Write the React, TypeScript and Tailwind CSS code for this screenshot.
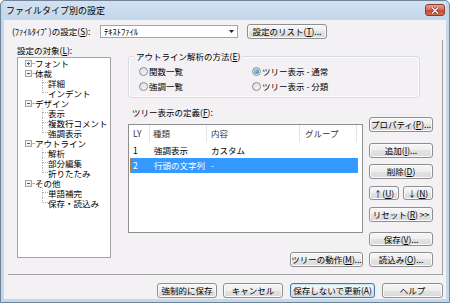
import React from "react";

type BtnProps = {
  children: React.ReactNode;
  className?: string;
  primary?: boolean;
};

// windows 7 style push button
const Btn = ({ children, className = "", primary = false }: BtnProps) => (
  <div
    className={`flex items-center justify-center rounded-[3px] border text-[8.5px] leading-none text-black whitespace-nowrap bg-[linear-gradient(to_bottom,#f6f6f6_0%,#eeeeee_50%,#e3e3e3_50%,#dadada_100%)] ${
      primary
        ? "border-[#3c7fb1] shadow-[inset_0_0_0_1px_#c4e5f6]"
        : "border-[#8f8f8f] shadow-[inset_0_0_0_1px_#fbfbfb]"
    } ${className}`}
  >
    {children}
  </div>
);

const U = ({ c }: { c: string }) => <span className="underline">{c}</span>;

const Radio = ({ label, checked = false }: { label: string; checked?: boolean }) => (
  <div className="flex h-[10px] items-center">
    <span className="flex h-[9px] w-[9px] items-center justify-center rounded-full border border-[#8e8f8f] bg-[linear-gradient(135deg,#dcdcdc,#f8f8f8)]">
      {checked && (
        <span className="h-[5px] w-[5px] rounded-full bg-[radial-gradient(circle_at_35%_35%,#8fd0f5,#1a6fb8)]" />
      )}
    </span>
    <span className="ml-[1px]">{label}</span>
  </div>
);

const TREE = [
  { label: "フォント", open: false, children: [] as string[] },
  { label: "体裁", open: true, children: ["詳細", "インデント"] },
  { label: "デザイン", open: true, children: ["表示", "複数行コメント", "強調表示"] },
  { label: "アウトライン", open: true, children: ["解析", "部分編集", "折りたたみ"] },
  { label: "その他", open: true, children: ["単語補完", "保存・読込み"] },
];

const TreeView = () => (
  <div className="h-[201px] w-[94px] border border-[#a3a3a3] bg-white">
    {TREE.map((node) => (
      <div key={node.label}>
        <div className="flex h-[10px] items-center">
          <div className="relative ml-[7px] flex h-[7px] w-[7px] items-center justify-center border border-[#a6a6a6] bg-[linear-gradient(135deg,#ffffff,#e6e6e6)]">
            <div className="h-px w-[3px] bg-[#3a5f8f]" />
            {!node.open && <div className="absolute h-[3px] w-px bg-[#3a5f8f]" />}
          </div>
          <div className="w-[2px] border-t border-dotted border-[#b4b4b4]" />
          <span className="ml-[1px]">{node.label}</span>
        </div>
        {node.children.map((child, i) => (
          <div key={child} className="flex h-[10px] items-center">
            <div className="ml-[24px] flex h-full w-[6px] flex-col">
              <div className="h-1/2 border-b border-l border-dotted border-[#b4b4b4]" />
              {i < node.children.length - 1 && (
                <div className="h-1/2 border-l border-dotted border-[#b4b4b4]" />
              )}
            </div>
            <span>{child}</span>
          </div>
        ))}
      </div>
    ))}
  </div>
);

const ROWS = [
  { ly: "1", kind: "強調表示", body: "カスタム", selected: false },
  { ly: "2", kind: "行頭の文字列", body: "-", selected: true },
];

const ListView = () => (
  <div className="mt-[7px] h-[109px] w-[235px] border border-[#8e8f8f] bg-white">
    <div className="flex h-[17px] items-center text-[#333]">
      <div className="flex h-full w-[21px] items-center border-r border-[#e3e3e3] pl-[4px]">LY</div>
      <div className="flex h-full w-[57px] items-center border-r border-[#e3e3e3] pl-[3px]">種類</div>
      <div className="flex h-full w-[93px] items-center border-r border-[#e3e3e3] pl-[4px]">内容</div>
      <div className="flex h-full w-[57px] items-center border-r border-[#e3e3e3] pl-[5px]">グループ</div>
    </div>
    {ROWS.map((r) => (
      <div
        key={r.ly}
        className={`ml-[1px] flex w-[228px] items-center ${
          r.selected
            ? "h-[15px] border border-dotted border-[#b8864a] bg-[#3399ff] text-white"
            : "h-[16px] border border-transparent"
        }`}
      >
        <div className="w-[20px] pl-[2px]">{r.ly}</div>
        <div className="w-[57px] pl-[3px]">{r.kind}</div>
        <div className="w-[93px] pl-[3px]">{r.body}</div>
      </div>
    ))}
  </div>
);

const App = () => {
  return (
    <div className="flex h-[303px] w-[450px] flex-col rounded-t-[5px] border border-[#6f8399] bg-[#c4d8ed] px-[3px] pb-[3px] font-['Noto_Sans_CJK_JP',sans-serif] text-[8.5px] leading-none text-black">
      {/* title bar */}
      <div className="flex h-[19px] items-start justify-between bg-[linear-gradient(to_bottom,#d3e2f1,#c2d6eb)]">
        <span className="ml-[2px] mt-[5px] text-[9px]">ファイルタイプ別の設定</span>
        <div className="mr-[1px] mt-[3px] flex h-[12px] w-[20px] items-center justify-center rounded-[3px] border border-[#8a3d30] bg-[linear-gradient(to_bottom,#e8a090_0%,#d46a55_50%,#c14a33_51%,#cf6b4f_100%)]">
          <svg width="8" height="7" viewBox="0 0 8 7">
            <path d="M1 0.5 L7 6.5 M7 0.5 L1 6.5" stroke="#5a1e14" strokeWidth="2.4" />
            <path d="M1 0.5 L7 6.5 M7 0.5 L1 6.5" stroke="#ffffff" strokeWidth="1.4" />
          </svg>
        </div>
      </div>

      {/* client area */}
      <div className="flex flex-1 flex-col bg-[#f4f1f4]">
        <div className="mt-[3px] flex h-[16px] items-center pl-[8px]">
          <span className="w-[88px]">
            (ﾌｧｲﾙﾀｲﾌﾟ)の設定(<U c="S" />):
          </span>
          <div className="flex h-[13px] w-[138px] items-center justify-between border border-[#a5a5a5] bg-white pl-[3px]">
            <span>ﾃｷｽﾄﾌｧｲﾙ</span>
            <div className="flex h-full w-[11px] items-center justify-center">
              <svg width="5" height="3" viewBox="0 0 5 3">
                <path d="M0 0 H5 L2.5 3 Z" fill="#222" />
              </svg>
            </div>
          </div>
          <Btn className="ml-[9px] h-[15px] w-[80px]">
            設定のリスト(<U c="T" />)...
          </Btn>
        </div>

        {/* property panel */}
        <div className="ml-[4px] mt-[1px] flex h-[235px] w-[435px] border-b border-r border-[#a0a0a0]">
          <div className="flex w-[120px] flex-col pl-[9px]">
            <span className="mt-[5px] flex h-[10px] items-center">
              設定の対象(<U c="L" />):
            </span>
            <div className="mt-[2px]">
              <TreeView />
            </div>
          </div>

          <div className="flex flex-col">
            <div className="relative mt-[16px] h-[42px] w-[292px] rounded-[3px] border border-[#d5dde3] shadow-[inset_0_0_0_1px_#fbfbfb]">
              <span className="absolute left-[5px] top-[-6px] flex h-[10px] items-center bg-[#f4f1f4] px-[2px]">
                アウトライン解析の方法(<U c="E" />)
              </span>
              <div className="grid grid-cols-[113px_1fr] gap-y-[5px] pl-[10px] pt-[9px]">
                <Radio label="関数一覧" />
                <Radio label="ツリー表示 - 通常" checked />
                <Radio label="強調一覧" />
                <Radio label="ツリー表示 - 分類" />
              </div>
            </div>

            <div className="flex">
              <div className="flex w-[235px] flex-col">
                <span className="ml-[4px] mt-[9px] flex h-[10px] items-center">
                  ツリー表示の定義(<U c="F" />):
                </span>
                <ListView />
                <Btn className="mt-[19px] h-[15px] w-[73px] self-end">
                  ツリーの動作(<U c="M" />)...
                </Btn>
              </div>

              <div className="ml-[6px] mt-[19px] flex w-[64px] flex-col">
                <Btn className="h-[15px]">
                  プロパティ(<U c="P" />)...
                </Btn>
                <Btn className="mt-[11px] h-[15px]">
                  追加(<U c="I" />)...
                </Btn>
                <Btn className="mt-[6px] h-[15px]">
                  削除(<U c="D" />)
                </Btn>
                <div className="mt-[7px] flex justify-between">
                  <Btn className="h-[14px] w-[30px]">
                    ↑(<U c="U" />)
                  </Btn>
                  <Btn className="h-[14px] w-[30px]">
                    ↓(<U c="N" />)
                  </Btn>
                </div>
                <Btn className="mt-[7px] h-[15px]">
                  リセット(<U c="R" />) &gt;&gt;
                </Btn>
                <Btn className="mt-[10px] h-[14px]">
                  保存(<U c="V" />)...
                </Btn>
                <Btn className="mt-[6px] h-[15px]">
                  読込み(<U c="O" />)...
                </Btn>
              </div>
            </div>
          </div>
        </div>

        {/* dialog buttons */}
        <div className="mt-[8px] flex justify-end pr-[3px]">
          <Btn className="h-[15px] w-[60px]">強制的に保存</Btn>
          <Btn className="ml-[6px] h-[15px] w-[60px]">キャンセル</Btn>
          <Btn primary className="ml-[7px] h-[15px] w-[85px]">
            保存しないで更新(A)
          </Btn>
          <Btn className="ml-[7px] h-[15px] w-[61px]">ヘルプ</Btn>
        </div>
      </div>
    </div>
  );
};

export default App;
